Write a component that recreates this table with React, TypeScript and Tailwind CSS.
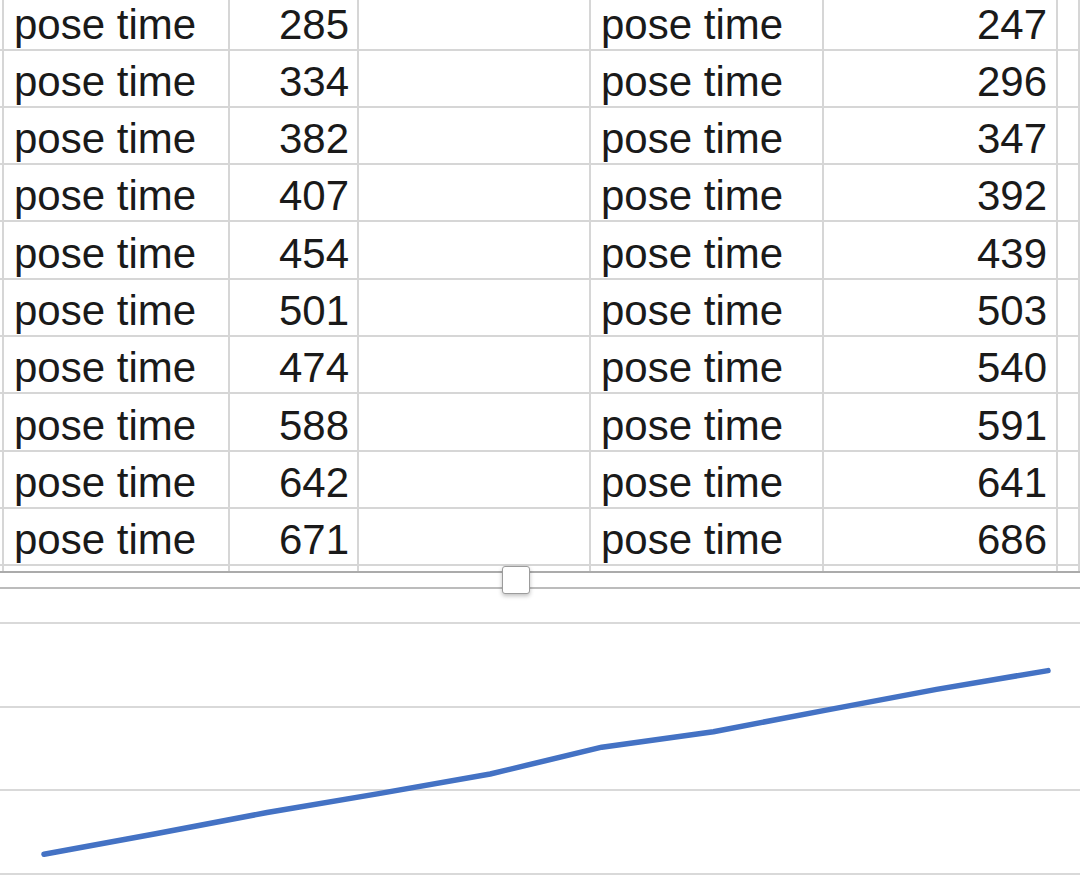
import React from "react";

const left = [285, 334, 382, 407, 454, 501, 474, 588, 642, 671];
const right = [247, 296, 347, 392, 439, 503, 540, 591, 641, 686];

function Row({ a, b, first }: { a: number | null; b: number | null; first?: boolean }) {
  const h = first ? "h-[50.5px]" : a === null ? "h-[5px]" : "h-[57.3px]";
  const cell = `shrink-0 border-r-2 border-[#d6d6d6] ${a === null ? "" : "border-b-2"} flex items-end pb-[3px]`;
  return (
    <div className={`flex ${h} w-[1080px]`}>
      <div className={`${cell} w-[4px]`} />
      <div className={`${cell} w-[226px] pl-[10px]`}>{a !== null && "pose time"}</div>
      <div className={`${cell} w-[129px] justify-end pr-[8px]`}>{a}</div>
      <div className={`${cell} w-[232px]`} />
      <div className={`${cell} w-[233px] pl-[10px]`}>{b !== null && "pose time"}</div>
      <div className={`${cell} w-[234px] justify-end pr-[9px]`}>{b}</div>
      <div className={`${cell} flex-1 border-r-0`} />
    </div>
  );
}

export default function App() {
  const pts = right
    .map((v, i) => {
      const x = 44 + i * 111.56;
      const y = 285 - ((v - 200) / 200) * 83.7;
      return `${x.toFixed(1)},${y.toFixed(1)}`;
    })
    .join(" ");
  return (
    <div className="relative w-[1080px] h-[883px] overflow-hidden bg-white font-['Liberation_Sans',Arial,sans-serif] text-[42px] leading-none text-[#1a1a1a]">
      {left.map((a, i) => (
        <Row key={i} a={a} b={right[i]} first={i === 0} />
      ))}
      <Row a={null} b={null} />
      <div className="border-t-2 border-[#ababab] h-[16px]" />
      <div className="border-t-2 border-[#bcbcbc]">
        <svg width="1080" height="294" viewBox="0 0 1080 294" className="block">
          {[34, 118, 201, 285].map((y) => (
            <line key={y} x1="0" x2="1080" y1={y} y2={y} stroke="#d9d9d9" strokeWidth="2" />
          ))}
          <polyline
            points={pts}
            fill="none"
            stroke="#4472c4"
            strokeWidth="5.5"
            strokeLinecap="round"
            strokeLinejoin="round"
          />
        </svg>
      </div>
      <div className="absolute left-[502px] top-[566px] w-[28px] h-[28px] bg-white border-[1.5px] border-[#9c9c9c] rounded-[3px] shadow-[0_2px_4px_rgba(0,0,0,0.25)]" />
    </div>
  );
}
